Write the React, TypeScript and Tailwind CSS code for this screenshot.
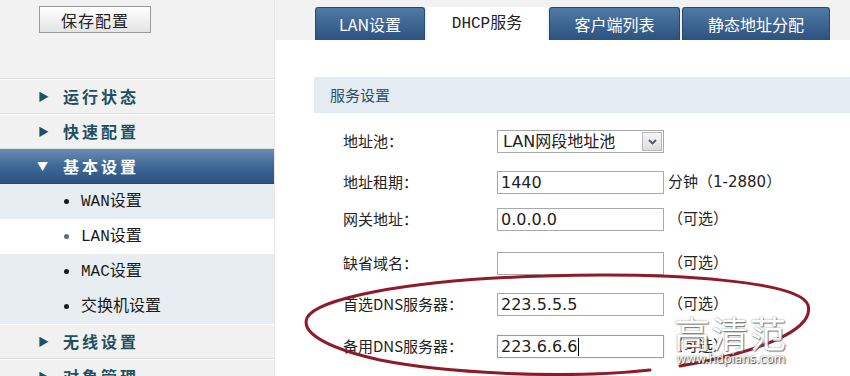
import React from "react";

const cjk = '"Noto Sans CJK SC", sans-serif';
const formFont = '"DejaVu Sans", "Noto Sans CJK SC", sans-serif';
const simsun = '"Liberation Mono", "Noto Sans CJK SC", monospace';

function MainItem({ label, open = false }: { label: string; open?: boolean }) {
  if (open) {
    return (
      <div className="h-[35px] shrink-0 flex items-center bg-gradient-to-b from-[#6a8db3] via-[#3f6896] to-[#2b5282] border-b border-[#24466f]">
        <span className="w-[63px] pl-[37px] text-white text-[11px] leading-none">▼</span>
        <span className="text-white font-bold text-[16px] tracking-[3px]">{label}</span>
      </div>
    );
  }
  return (
    <div className="h-[35px] shrink-0 flex items-center bg-[#f1f1f1] border-b border-[#dedede] shadow-[inset_0_1px_0_#ffffff]">
      <span className="w-[63px] pl-[38px] text-[#214f5f] text-[11px] leading-none">▶</span>
      <span className="text-[#214f5f] font-bold text-[16px] tracking-[3px]">{label}</span>
    </div>
  );
}

function SubItem({ label, active = false }: { label: string; active?: boolean }) {
  return (
    <div className={`h-[35px] shrink-0 flex items-center ${active ? "bg-white" : "bg-[#e8edf2]"}`}>
      <span className={`ml-[64px] w-[5px] h-[5px] rounded-full ${active ? "bg-[#5a6c78]" : "bg-[#1a1a1a]"}`} />
      <span className="ml-[12px] text-[16px] text-[#1a1a1a]" style={{ fontFamily: simsun }}>
        {label}
      </span>
    </div>
  );
}

function Tab({ label, active = false, w }: { label: string; active?: boolean; w: string }) {
  return (
    <div
      className={`${w} h-[33px] shrink-0 rounded-t-[3px] flex items-center justify-center text-[16px] ${
        active
          ? "bg-white text-[#222] text-[15px]"
          : "bg-gradient-to-b from-[#5179a5] to-[#2c5380] text-white border border-[#254a75] border-b-0"
      }`}
      style={{ fontFamily: active ? simsun : cjk }}
    >
      {label}
    </div>
  );
}

function Row({
  label,
  value,
  note,
  mt,
  focus = false,
}: {
  label: string;
  value: string;
  note?: string;
  mt: string;
  focus?: boolean;
}) {
  return (
    <div className={`flex items-center ${mt} h-[23px]`}>
      <div className="w-[154px] text-[15px] text-[#222]" style={{ fontFamily: cjk }}>
        {label}
      </div>
      <div
        className={`w-[167px] h-[23px] border ${
          focus ? "border-[#7fa7b8] shadow-[0_0_1px_#9fc3d3]" : "border-[#a9a9a9]"
        } bg-white flex items-center pl-[3px] text-[16px] text-[#222]`}
        style={{ fontFamily: formFont }}
      >
        {value}
        {focus && <span className="w-[1px] h-[18px] bg-black ml-[1px]" />}
      </div>
      {note && (
        <div className="ml-[4px] text-[15px] text-[#222]" style={{ fontFamily: formFont }}>
          {note}
        </div>
      )}
    </div>
  );
}

export default function App() {
  return (
    <div className="relative w-[850px] h-[376px] overflow-hidden flex bg-white" style={{ fontFamily: cjk }}>
      <aside className="w-[275px] shrink-0 bg-[#f2f2f2] flex flex-col border-r border-[#e6e6e6]">
        <div className="h-[79px] shrink-0 border-b border-[#dcdcdc] pt-[6px] pl-[39px]">
          <button className="w-[112px] h-[27px] border border-[#9a9a9a] bg-gradient-to-b from-white to-[#e4e4e4] text-[16px] text-[#222] flex items-center justify-center tracking-[1px]">
            保存配置
          </button>
        </div>
        <MainItem label="运行状态" />
        <MainItem label="快速配置" />
        <MainItem label="基本设置" open />
        <SubItem label="WAN设置" />
        <SubItem label="LAN设置" active />
        <SubItem label="MAC设置" />
        <SubItem label="交换机设置" />
        <MainItem label="无线设置" />
        <MainItem label="对象管理" />
      </aside>

      <main className="flex-1 flex flex-col">
        <div className="h-[40px] shrink-0 bg-[#f2f2f2] flex items-end pl-[40px] gap-[2px]">
          <Tab label="LAN设置" w="w-[110px]" />
          <Tab label="DHCP服务" w="w-[120px]" active />
          <Tab label="客户端列表" w="w-[131px]" />
          <Tab label="静态地址分配" w="w-[148px]" />
        </div>
        <div className="pl-[39px] pt-[37px]">
          <div className="h-[36px] bg-[#e4ebf2] flex items-center pl-[16px] text-[15px] text-[#2f4f63]">
            服务设置
          </div>
        </div>
        <div className="pl-[68px] flex flex-col">
          <div className="flex items-center mt-[17px] h-[23px]">
            <div className="w-[154px] text-[15px] text-[#222]">地址池：</div>
            <div className="w-[167px] h-[23px] border border-[#a9a9a9] bg-white flex items-center">
              <span className="flex-1 pl-[5px] text-[16px] text-[#222]" style={{ fontFamily: formFont }}>
                LAN网段地址池
              </span>
              <span className="w-[20px] h-[19px] mr-[1px] border border-[#b8b8b8] bg-gradient-to-b from-[#f7f7f7] to-[#dcdcdc] flex items-center justify-center">
                <svg width="9" height="6" viewBox="0 0 9 6">
                  <path d="M1 1 L4.5 4.5 L8 1" stroke="#4a5a6a" strokeWidth="1.8" fill="none" />
                </svg>
              </span>
            </div>
          </div>
          <Row label="地址租期：" value="1440" note="分钟（1-2880）" mt="mt-[18px]" />
          <Row label="网关地址：" value="0.0.0.0" note="（可选）" mt="mt-[14px]" />
          <Row label="缺省域名：" value="" note="（可选）" mt="mt-[21px]" />
          <Row label="首选DNS服务器：" value="223.5.5.5" note="（可选）" mt="mt-[18px]" />
          <Row label="备用DNS服务器：" value="223.6.6.6" note="（可选）" mt="mt-[19px]" focus />
        </div>
      </main>

      <svg className="absolute left-0 top-0 pointer-events-none" width="850" height="376" viewBox="0 0 850 376">
        <path
          d="M 545 276 C 680 272, 800 282, 808 305 C 815 330, 760 352, 680 366 M 650 370 C 560 380, 440 372, 380 360 C 335 350, 300 335, 307 318 C 315 300, 400 280, 545 276"
          stroke="#8e1c28"
          strokeWidth="3"
          fill="none"
          strokeLinecap="round"
        />
      </svg>

      <div className="absolute left-[674px] top-[312px] flex flex-col items-center pointer-events-none opacity-90">
        <div
          className="text-[36px] leading-[40px] text-white tracking-[2px]"
          style={{ textShadow: "0 0 2px #777, 1px 1px 1px #666" }}
        >
          高清范
        </div>
        <div
          className="text-[12px] leading-[14px] text-white"
          style={{ fontFamily: '"DejaVu Sans", sans-serif', textShadow: "0 0 2px #444, 1px 1px 1px #333" }}
        >
          www.hdpians.com
        </div>
      </div>
    </div>
  );
}
